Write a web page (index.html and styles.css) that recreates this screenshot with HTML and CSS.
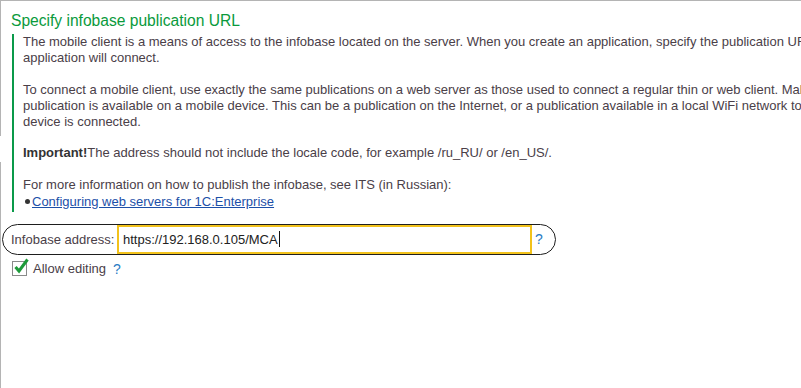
FILE: index.html
```html
<!DOCTYPE html>
<html lang="en">
<head>
  <meta charset="UTF-8" />
  <title>Specify infobase publication URL</title>
  <link rel="stylesheet" href="styles.css">
</head>
<body>
  <div class="frame">
    <h1 class="title">Specify infobase publication URL</h1>

    <!-- Help text -->
    <div class="note">
      <p>The mobile client is a means of access to the infobase located on the server. When you create an application, specify the publication URL to which the mobile<br>application will connect.</p>
      <p>To connect a mobile client, use exactly the same publications on a web server as those used to connect a regular thin or web client. Make sure that this<br>publication is available on a mobile device. This can be a publication on the Internet, or a publication available in a local WiFi network to which the mobile<br>device is connected.</p>
      <p><b>Important!</b>The address should not include the locale code, for example /ru_RU/ or /en_US/.</p>
      <p>For more information on how to publish the infobase, see ITS (in Russian):</p>
      <ul class="links">
        <li><a href="#">Configuring web servers for 1C:Enterprise</a></li>
      </ul>
    </div>

    <!-- Address field -->
    <div class="field">
      <label class="field-label" for="address">Infobase address:</label>
      <div class="field-input"><span id="address">https://192.168.0.105/MCA</span><span class="caret"></span></div>
      <span class="help">?</span>
    </div>

    <div class="check-row">
      <span class="checkbox">
        <svg width="18" height="18" viewBox="0 0 18 18"><path d="M3.5 10 L7 14 L15.5 2.5" fill="none" stroke="#1e9a3a" stroke-width="3" stroke-linejoin="miter"/></svg>
      </span>
      <span class="check-label">Allow editing</span>
      <span class="help">?</span>
    </div>
  </div>
</body>
</html>
```

FILE: styles.css
```css
/* Base */
* { margin:0; padding:0; box-sizing:border-box; }
html, body { height:100%; }
body {
  font-family:"Liberation Sans",Arial,sans-serif;
  font-size:13px;
  color:#444;
  background:#fff;
  overflow:hidden;
}

/* Window frame: grey top and left edges */
.frame {
  width:1000px; height:100%;
  border-top:1px solid #b4b4b4;
  padding:10px 0 0 11px;
  background:
    linear-gradient(#b4b4b4,#b4b4b4) 0 0/1px 135px no-repeat,
    linear-gradient(#b4b4b4,#b4b4b4) 0 161px/1px 100% no-repeat;
}
.title {
  font-size:15.6px;
  font-weight:normal;
  color:#0a9a3c;
  line-height:20px;
  margin-bottom:3px;
}

/* Help text block with green rule */
.note {
  border-left:2px solid #0a9a4a;
  padding:0 0 2px 9px;
  margin-left:1px;
  line-height:16px;
  color:#4a4048;
  white-space:nowrap;
}
.note p { margin-bottom:15.5px; }
.note p:nth-of-type(4) { margin-bottom:0; }
.note b { color:#333; }
.links { list-style:none; line-height:17px; }
.links li::before {
  content:"";
  display:inline-block;
  width:5px; height:5px;
  border-radius:50%;
  background:#333;
  margin:0 2px 2px 2px;
  vertical-align:middle;
}
.links a { color:#1c4fa8; }

/* Address field, circled */
.field {
  display:flex; align-items:center;
  width:554px; height:31px;
  margin:12px 0 0 -9px;
  border:1.5px solid #1e1e1e;
  border-radius:16px;
  padding-left:8px;
}
.field-label { color:#4a4048; width:106px; }
.field-input {
  display:flex; align-items:center;
  width:415px; height:29px;
  border:2px solid #f2c21b;
  padding-left:4px;
  color:#222;
}
.caret { width:1px; height:16px; background:#111; margin-left:1px; }
.help { color:#2a7cc4; font-size:14px; margin-left:3px; }

/* Checkbox row */
.check-row {
  display:flex; align-items:center;
  margin:6px 0 0 1px;
  height:16px;
}
.checkbox {
  position:relative;
  width:15px; height:15px;
  border:1px solid #8a8a8a;
  margin-right:6px;
}
.checkbox svg { position:absolute; left:-1px; top:-5px; }
.check-label { color:#4a4048; }
.check-row .help { margin-left:7px; }
```
